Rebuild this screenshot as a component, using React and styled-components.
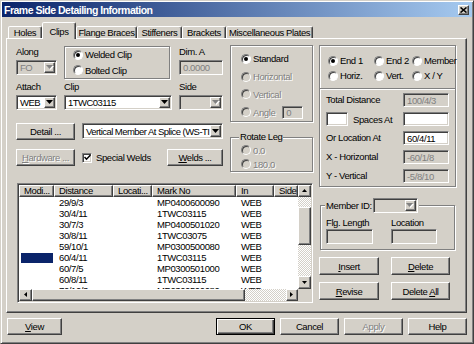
import React from "react";
import styled, { createGlobalStyle, css } from "styled-components";

const GlobalStyle = createGlobalStyle`
  * { box-sizing: border-box; }
  body {
    margin: 0;
    background: #fff;
    font-family: "Liberation Sans", Arial, sans-serif;
    font-size: 9.5px;
    letter-spacing: -0.4px;
    color: #000;
  }
`;

const raised = css`
  border: 1px solid;
  border-color: #fff #404040 #404040 #fff;
  box-shadow: inset -1px -1px #808080;
`;
const sunken = css`
  border: 1px solid;
  border-color: #808080 #fff #fff #808080;
  box-shadow: inset 1px 1px #404040, inset -1px -1px #d4d0c8;
`;
const etched = css`
  border: 1px solid #808080;
  box-shadow: inset 1px 1px #fff, 1px 1px #fff;
`;
const embossed = css`
  color: #808080;
  text-shadow: 1px 1px #fff;
`;

const COLS = "35px 59px 39px 84px 38px 24px";

const rows = [
  ["29/9/3", "MP0400600090"],
  ["30/4/11", "1TWC03115"],
  ["30/7/3", "MP0400501020"],
  ["30/8/11", "1TWC03075"],
  ["59/10/1", "MP0300500080"],
  ["60/4/11", "1TWC03115", true],
  ["60/7/5", "MP0300501000"],
  ["60/8/11", "1TWC03115"],
  ["70/10/3", "MP0300500080"],
];

const tabs = [
  ["Holes", 34],
  ["Clips", 34, true],
  ["Flange Braces", 61],
  ["Stiffeners", 45],
  ["Brackets", 44],
  ["Miscellaneous Plates", 87],
];

const Arrow = ({ dir = "down", disabled, size = 7 }) => {
  const h = Math.ceil(size / 2);
  const paths = {
    down: `M0 0 H${size} L${size / 2} ${h}Z`,
    up: `M0 ${h} H${size} L${size / 2} 0Z`,
  };
  const vertical = dir === "up" || dir === "down";
  const d = vertical
    ? paths[dir]
    : dir === "left"
    ? `M${h} 0 V${size} L0 ${size / 2}Z`
    : `M0 0 V${size} L${h} ${size / 2}Z`;
  const w = vertical ? size : h;
  const ht = vertical ? h : size;
  return (
    <svg width={w + 1} height={ht + 1} viewBox={`0 0 ${w + 1} ${ht + 1}`}>
      {disabled && <path d={d} fill="#fff" transform="translate(1 1)" />}
      <path d={d} fill={disabled ? "#808080" : "#000"} />
    </svg>
  );
};

const Window = styled.div`
  width: 474px;
  height: 344px;
  background: #d4d0c8;
  border: 1px solid;
  border-color: #d4d0c8 #404040 #404040 #d4d0c8;
  box-shadow: inset 1px 1px #fff, inset -1px -1px #808080;
  padding: 1px;
  display: flex;
  flex-direction: column;
`;

const TitleBar = styled.div`
  height: 15px;
  display: flex;
  align-items: center;
  justify-content: space-between;
  padding: 0 3px 0 2px;
  background: linear-gradient(90deg, #0a246a, #a6caf0);
`;

const Title = styled.span`
  color: #fff;
  font-weight: bold;
  font-size: 10.5px;
  letter-spacing: -0.5px;
`;

const CloseBox = styled.div`
  width: 11px;
  height: 10px;
  background: #d4d0c8;
  ${raised};
  display: flex;
  align-items: center;
  justify-content: center;
`;

const TabStrip = styled.div`
  height: 21px;
  display: flex;
  align-items: flex-end;
  padding-left: 6px;
`;

const Tab = styled.div`
  position: relative;
  z-index: ${(p) => (p.$active ? 1 : 0)};
  width: ${(p) => p.$w}px;
  height: ${(p) => (p.$active ? 17 : 12)}px;
  margin-bottom: ${(p) => (p.$active ? -1 : 0)}px;
  background: #d4d0c8;
  border: 1px solid;
  border-bottom: none;
  border-color: #fff #404040 transparent #fff;
  box-shadow: inset -1px 0 #808080;
  border-radius: 2px 2px 0 0;
  display: flex;
  align-items: center;
  justify-content: center;
  white-space: nowrap;
`;

const TabPage = styled.div`
  margin-left: 4px;
  width: 461px;
  height: 275px;
  border: 1px solid;
  border-color: #fff #404040 #404040 #fff;
  box-shadow: inset -1px -1px #808080;
  padding: 6px 0 0 9px;
  display: flex;
  gap: 6px;
`;

const LeftPane = styled.div`
  width: 297px;
  display: flex;
  flex-direction: column;
`;

const TopArea = styled.div`
  height: 128px;
  display: flex;
  gap: 7px;
`;

const ClipColumn = styled.div`
  width: 207px;
  display: flex;
  flex-direction: column;
`;

const FormRow = styled.div`
  display: flex;
  align-items: flex-start;
  height: ${(p) => p.$h}px;
  margin-top: ${(p) => p.$mt || 0}px;
`;

const FieldStack = styled.div`
  width: ${(p) => p.$w}px;
  margin-left: ${(p) => p.$ml || 0}px;
  display: flex;
  flex-direction: column;
  gap: 2px;
  padding-top: 1px;
`;

const Label = styled.div`
  height: 12px;
  line-height: 12px;
  white-space: nowrap;
`;

const GroupBox = styled.div`
  ${etched};
  width: ${(p) => p.$w}px;
  height: ${(p) => p.$h}px;
  margin: ${(p) => p.$m || "0"};
  padding: ${(p) => p.$pad || "0"};
  display: flex;
  flex-direction: column;
`;

const RadioRow = styled.div`
  height: ${(p) => p.$h}px;
  display: flex;
  align-items: center;
`;

const RadioLabel = styled.label`
  display: flex;
  align-items: center;
  gap: 2px;
  white-space: nowrap;
  ${(p) => p.$disabled && embossed};
`;

const RadioDot = styled.span`
  flex: none;
  width: 10px;
  height: 10px;
  border-radius: 50%;
  background: ${(p) => (p.$disabled ? "#d4d0c8" : "#fff")};
  border: 1px solid;
  border-color: #808080 #fff #fff #808080;
  box-shadow: inset 1px 1px #404040;
  display: flex;
  align-items: center;
  justify-content: center;
  &::after {
    content: "";
    display: ${(p) => (p.$checked ? "block" : "none")};
    width: 4px;
    height: 4px;
    border-radius: 50%;
    background: #000;
  }
`;

const Radio = ({ children, checked, disabled }) => (
  <RadioLabel $disabled={disabled}>
    <RadioDot $checked={checked} $disabled={disabled} />
    <span>{children}</span>
  </RadioLabel>
);

const Field = styled.div`
  ${sunken};
  flex: none;
  width: ${(p) => p.$w}px;
  height: ${(p) => p.$h || 14}px;
  margin-left: ${(p) => p.$ml || 0}px;
  background: ${(p) => (p.$disabled ? "#d4d0c8" : "#fff")};
  color: ${(p) => (p.$disabled ? "#808080" : "#000")};
  padding-left: 3px;
  display: flex;
  align-items: center;
  white-space: nowrap;
  overflow: hidden;
`;

const ComboBox = styled.div`
  ${sunken};
  flex: none;
  width: ${(p) => p.$w}px;
  height: ${(p) => p.$h || 15}px;
  margin-left: ${(p) => p.$ml || 0}px;
  padding: 1px;
  background: ${(p) => (p.$disabled ? "#d4d0c8" : "#fff")};
  color: ${(p) => (p.$disabled ? "#808080" : "#000")};
  display: flex;
`;

const ComboText = styled.div`
  flex: 1;
  padding-left: 2px;
  letter-spacing: -0.55px;
  display: flex;
  align-items: center;
  overflow: hidden;
  white-space: nowrap;
`;

const DropButton = styled.div`
  width: 11px;
  background: #d4d0c8;
  ${raised};
  display: flex;
  align-items: center;
  justify-content: center;
`;

const Combo = ({ w, h, ml, disabled, children }) => (
  <ComboBox $w={w} $h={h} $ml={ml} $disabled={disabled}>
    <ComboText>{children}</ComboText>
    <DropButton>
      <Arrow dir="down" disabled={disabled} />
    </DropButton>
  </ComboBox>
);

const Button = styled.div`
  flex: none;
  width: ${(p) => p.$w}px;
  height: ${(p) => p.$h || 17}px;
  margin-left: ${(p) => (p.$ml === "auto" ? "auto" : `${p.$ml || 0}px`)};
  background: #d4d0c8;
  ${(p) =>
    p.$default
      ? css`
          border: 1px solid #000;
          box-shadow: inset 1px 1px #fff, inset -1px -1px #404040,
            inset -2px -2px #808080;
        `
      : raised};
  display: flex;
  align-items: center;
  justify-content: center;
  white-space: nowrap;
  ${(p) => p.$disabled && embossed};
`;

const CheckOption = styled.label`
  margin-left: 7px;
  height: 17px;
  display: flex;
  align-items: center;
  gap: 4px;
  white-space: nowrap;
`;

const CheckBox = styled.span`
  ${sunken};
  width: 10px;
  height: 10px;
  background: #fff;
  display: flex;
  align-items: center;
  justify-content: center;
`;

const ModeColumn = styled.div`
  width: 83px;
  display: flex;
  flex-direction: column;
`;

const FrameGroup = styled.fieldset`
  ${etched};
  margin: ${(p) => p.$m || "0"};
  padding: ${(p) => p.$pad || "0"};
  width: ${(p) => p.$w}px;
  min-width: 0;
`;

const Legend = styled.legend`
  padding: 0 1px;
  margin-left: ${(p) => p.$ml || 0}px;
  background: #d4d0c8;
  line-height: 12px;
`;

const LegendInner = styled.span`
  display: flex;
  align-items: center;
  gap: 1px;
  height: 15px;
`;

const ListFrame = styled.div`
  ${sunken};
  margin: 10px 0 0 1px;
  width: 296px;
  height: 120px;
  padding: 1px;
  display: grid;
  grid-template-columns: 1fr 13px;
  grid-template-rows: 1fr 12px;
`;

const ListBody = styled.div`
  background: #fff;
  overflow: hidden;
`;

const HeaderRow = styled.div`
  display: grid;
  grid-template-columns: ${COLS};
  height: 12px;
`;

const HeaderCell = styled.div`
  ${raised};
  background: #d4d0c8;
  padding-left: 4px;
  line-height: 10px;
  overflow: hidden;
  white-space: nowrap;
`;

const ListRow = styled.div`
  display: grid;
  grid-template-columns: ${COLS};
  height: 11px;
  line-height: 11px;
`;

const Cell = styled.div`
  padding-left: 5px;
  white-space: nowrap;
  overflow: hidden;
`;

const SelectedMark = styled.div`
  margin: 1px 1px 0 2px;
  height: 10px;
  background: #0a246a;
`;

const track = css`
  background: repeating-conic-gradient(#fff 0% 25%, #d4d0c8 0% 50%) 0 0 / 2px
    2px;
`;

const VScroll = styled.div`
  display: flex;
  flex-direction: column;
`;

const HScroll = styled.div`
  display: flex;
`;

const ScrollButton = styled.div`
  flex: none;
  width: ${(p) => p.$w || 13}px;
  height: ${(p) => p.$h || 12}px;
  background: #d4d0c8;
  ${raised};
  display: flex;
  align-items: center;
  justify-content: center;
`;

const Track = styled.div`
  flex: 1;
  display: flex;
  flex-direction: ${(p) => (p.$vertical ? "column" : "row")};
  ${track};
`;

const Thumb = styled.div`
  flex: none;
  background: #d4d0c8;
  ${raised};
  width: ${(p) => p.$w};
  height: ${(p) => p.$h};
  margin-top: ${(p) => p.$mt || 0}px;
`;

const Corner = styled.div`
  background: #d4d0c8;
`;

const RightPane = styled.div`
  width: 137px;
  display: flex;
  flex-direction: column;
`;

const PositionBox = styled.div`
  ${etched};
  height: 142px;
  display: flex;
  flex-direction: column;
`;

const EndChoices = styled.div`
  height: 42px;
  padding: 7px 0 0 8px;
  display: grid;
  grid-template-columns: 46px 38px 1fr;
  grid-auto-rows: 15px;
  align-items: center;
`;

const Divider = styled.div`
  height: 2px;
  border-top: 1px solid #808080;
  border-bottom: 1px solid #fff;
`;

const DistanceGrid = styled.div`
  padding: 3px 0 0 6px;
  display: grid;
  grid-template-columns: 77px 46px;
  grid-auto-rows: 14px;
  row-gap: 5px;
  align-items: center;
`;

const SpacesCell = styled.div`
  display: flex;
  align-items: center;
  gap: 5px;
`;

const MemberGrid = styled.div`
  margin-top: 4px;
  display: grid;
  grid-template-columns: 47px 46px;
  grid-template-rows: 12px 15px;
  column-gap: 18px;
  align-items: center;
`;

const ActionGrid = styled.div`
  margin-top: 7px;
  display: grid;
  grid-template-columns: 60px 59px;
  grid-auto-rows: 18px;
  column-gap: 12px;
  row-gap: 7px;
`;

const BottomBar = styled.div`
  margin-top: 5px;
  height: 17px;
  padding: 0 5px;
  display: flex;
  gap: 5px;
`;

export default function App() {
  return (
    <>
      <GlobalStyle />
      <Window>
        <TitleBar>
          <Title>Frame Side Detailing Information</Title>
          <CloseBox>
            <svg width="7" height="6" viewBox="0 0 7 6">
              <path d="M0.5 0.5 L6.5 5.5 M6.5 0.5 L0.5 5.5" stroke="#000" strokeWidth="1.6" />
            </svg>
          </CloseBox>
        </TitleBar>

        <TabStrip>
          {tabs.map(([name, w, active]) => (
            <Tab key={name} $w={w} $active={active}>
              {name}
            </Tab>
          ))}
        </TabStrip>

        <TabPage>
          <LeftPane>
            <TopArea>
              <ClipColumn>
                <FormRow $h={35}>
                  <FieldStack $w={41}>
                    <Label>Along</Label>
                    <Combo w={41} disabled>
                      FO
                    </Combo>
                  </FieldStack>
                  <GroupBox $w={106} $h={33} $m="1px 0 0 7px" $pad="0 0 0 8px">
                    <RadioRow $h={16}>
                      <Radio checked>Welded Clip</Radio>
                    </RadioRow>
                    <RadioRow $h={16}>
                      <Radio>Bolted Clip</Radio>
                    </RadioRow>
                  </GroupBox>
                  <FieldStack $w={44} $ml={9}>
                    <Label>Dim. A</Label>
                    <Field $w={44} $h={15} $disabled>
                      0.0000
                    </Field>
                  </FieldStack>
                </FormRow>

                <FormRow $h={30}>
                  <FieldStack $w={41}>
                    <Label>Attach</Label>
                    <Combo w={41}>WEB</Combo>
                  </FieldStack>
                  <FieldStack $w={108} $ml={7}>
                    <Label>Clip</Label>
                    <Combo w={108}>1TWC03115</Combo>
                  </FieldStack>
                  <FieldStack $w={44} $ml={7}>
                    <Label>Side</Label>
                    <Combo w={44} disabled />
                  </FieldStack>
                </FormRow>

                <FormRow $h={17} $mt={13}>
                  <Button $w={59}>Detail ...</Button>
                  <Combo w={141} h={16} ml={7}>
                    Vertical Member At Splice (WS-TI
                  </Combo>
                </FormRow>

                <FormRow $h={17} $mt={9}>
                  <Button $w={59} $disabled>
                    <span>
                      <u>H</u>ardware ...
                    </span>
                  </Button>
                  <CheckOption>
                    <CheckBox>
                      <svg width="7" height="7" viewBox="0 0 7 7">
                        <path d="M0.5 3 L2.5 5.2 L6.5 1" fill="none" stroke="#000" strokeWidth="1.5" />
                      </svg>
                    </CheckBox>
                    Special Welds
                  </CheckOption>
                  <Button $w={56} $ml="auto">
                    <span>
                      <u>W</u>elds ...
                    </span>
                  </Button>
                </FormRow>
              </ClipColumn>

              <ModeColumn>
                <GroupBox $w={83} $h={77} $pad="4px 0 0 10px">
                  <RadioRow $h={18}>
                    <Radio checked>Standard</Radio>
                  </RadioRow>
                  <RadioRow $h={18}>
                    <Radio disabled>Horizontal</Radio>
                  </RadioRow>
                  <RadioRow $h={18}>
                    <Radio disabled>Vertical</Radio>
                  </RadioRow>
                  <RadioRow $h={18}>
                    <Radio disabled>Angle</Radio>
                    <Field $w={21} $h={13} $ml={7} $disabled>
                      0
                    </Field>
                  </RadioRow>
                </GroupBox>
                <FrameGroup $w={83} $m="9px 0 0" $pad="0 0 0 10px">
                  <Legend $ml={-2}>Rotate Leg</Legend>
                  <RadioRow $h={14}>
                    <Radio disabled>0.0</Radio>
                  </RadioRow>
                  <RadioRow $h={14}>
                    <Radio disabled>180.0</Radio>
                  </RadioRow>
                </FrameGroup>
              </ModeColumn>
            </TopArea>

            <ListFrame>
              <ListBody>
                <HeaderRow>
                  <HeaderCell>Modi...</HeaderCell>
                  <HeaderCell>Distance</HeaderCell>
                  <HeaderCell>Locati...</HeaderCell>
                  <HeaderCell>Mark No</HeaderCell>
                  <HeaderCell>In</HeaderCell>
                  <HeaderCell>Side</HeaderCell>
                </HeaderRow>
                {rows.map(([dist, mark, selected], i) => (
                  <ListRow key={i}>
                    <div>{selected && <SelectedMark />}</div>
                    <Cell>{dist}</Cell>
                    <Cell />
                    <Cell>{mark}</Cell>
                    <Cell>WEB</Cell>
                    <Cell />
                  </ListRow>
                ))}
              </ListBody>
              <VScroll>
                <ScrollButton>
                  <Arrow dir="up" size={5} />
                </ScrollButton>
                <Track $vertical>
                  <Thumb $w="100%" $h="38px" $mt={10} />
                </Track>
                <ScrollButton $h={13}>
                  <Arrow dir="down" size={5} />
                </ScrollButton>
              </VScroll>
              <HScroll>
                <ScrollButton>
                  <Arrow dir="left" size={5} />
                </ScrollButton>
                <Thumb $w="213px" $h="100%" />
                <Track />
                <ScrollButton $w={12}>
                  <Arrow dir="right" size={5} />
                </ScrollButton>
              </HScroll>
              <Corner />
            </ListFrame>
          </LeftPane>

          <RightPane>
            <PositionBox>
              <EndChoices>
                <Radio checked>End 1</Radio>
                <Radio>End 2</Radio>
                <Radio>Member</Radio>
                <Radio>Horiz.</Radio>
                <Radio>Vert.</Radio>
                <Radio>X / Y</Radio>
              </EndChoices>
              <Divider />
              <DistanceGrid>
                <Label>Total Distance</Label>
                <Field $w={46} $disabled>
                  100/4/3
                </Field>
                <SpacesCell>
                  <Field $w={22} />
                  <span>Spaces At</span>
                </SpacesCell>
                <Field $w={46} />
                <Label>Or Location At</Label>
                <Field $w={46}>60/4/11</Field>
                <Label>X - Horizontal</Label>
                <Field $w={46} $disabled>
                  -60/1/8
                </Field>
                <Label>Y - Vertical</Label>
                <Field $w={46} $disabled>
                  -5/8/10
                </Field>
              </DistanceGrid>
            </PositionBox>

            <FrameGroup $w={135} $m="11px 0 0 1px" $pad="0 0 5px 5px">
              <Legend $ml={-1}>
                <LegendInner>
                  Member ID:
                  <Combo w={45} disabled />
                </LegendInner>
              </Legend>
              <MemberGrid>
                <Label>Flg. Length</Label>
                <Label>Location</Label>
                <Field $w={47} $h={15} $disabled />
                <Field $w={46} $h={15} $disabled />
              </MemberGrid>
            </FrameGroup>

            <ActionGrid>
              <Button $w={60} $h={18}>
                <span>
                  <u>I</u>nsert
                </span>
              </Button>
              <Button $w={59} $h={18}>
                <span>
                  <u>D</u>elete
                </span>
              </Button>
              <Button $w={60} $h={18}>
                <span>
                  <u>R</u>evise
                </span>
              </Button>
              <Button $w={59} $h={18}>
                <span>
                  Delete <u>A</u>ll
                </span>
              </Button>
            </ActionGrid>
          </RightPane>
        </TabPage>

        <BottomBar>
          <Button $w={55}>
            <span>
              <u>V</u>iew
            </span>
          </Button>
          <Button $w={59} $ml="auto" $default>
            OK
          </Button>
          <Button $w={59}>Cancel</Button>
          <Button $w={59} $disabled>
            Apply
          </Button>
          <Button $w={59}>Help</Button>
        </BottomBar>
      </Window>
    </>
  );
}
